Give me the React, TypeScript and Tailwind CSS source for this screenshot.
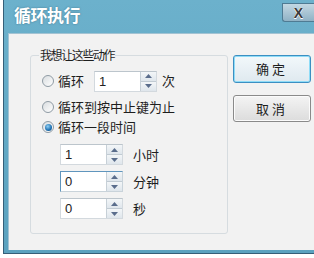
import React from "react";

const CJK = "font-['Microsoft_YaHei','Noto_Sans_CJK_SC',sans-serif]";

const Radio = ({ checked }: { checked?: boolean }) => (
  <span className="w-[12px] h-[12px] shrink-0 rounded-full border border-[#8f9ba4] bg-gradient-to-br from-[#d9dde0] to-[#ffffff] flex items-center justify-center">
    {checked && (
      <span className="w-[7px] h-[7px] rounded-full bg-[radial-gradient(circle_at_40%_35%,#8fd0f5,#1d6fb0_60%,#0f4a7d)]" />
    )}
  </span>
);

const Arrow = ({ up }: { up?: boolean }) => (
  <svg width="7" height="4" viewBox="0 0 7 4">
    <path d={up ? "M0 4 L3.5 0 L7 4 Z" : "M0 0 L3.5 4 L7 0 Z"} fill="#5a6d8c" />
  </svg>
);

const Spin = ({ value, focused }: { value: string; focused?: boolean }) => (
  <div
    className={`w-[63px] h-[21px] flex bg-white border ${
      focused ? "border-[#5f95bd] border-r-[#c9d3da] border-b-[#c9d3da]" : "border-[#d3d9de] border-t-[#bcc5cc]"
    }`}
  >
    <span className="flex-1 pl-[4px] text-[13px] leading-[19px] text-[#222] font-['Liberation_Sans',sans-serif]">
      {value}
    </span>
    <div className="w-[16px] flex flex-col border-l border-[#c7d0d7]">
      <div className="flex-1 flex items-center justify-center bg-gradient-to-b from-[#f3f6f8] to-[#dfe6ec] border-b border-[#c1cbd3]">
        <Arrow up />
      </div>
      <div className="flex-1 flex items-center justify-center bg-gradient-to-b from-[#f3f6f8] to-[#dfe6ec]">
        <Arrow />
      </div>
    </div>
  </div>
);

export default function App() {
  return (
    <div className={`w-[314px] h-[258px] bg-white overflow-hidden ${CJK}`}>
      <div className="ml-[3px] h-[254px] flex flex-col bg-gradient-to-b from-[#6cb1cc] to-[#5ba2bf] border-l border-b border-[#355f78]">
        {/* title bar */}
        <div className="h-[33px] shrink-0 flex items-start justify-between">
          <span className="ml-[10px] mt-[4px] text-[17px] leading-[22px] font-bold text-white tracking-[-0.5px] [text-shadow:0_0_2px_rgba(40,80,100,0.6)]">
            循环执行
          </span>
          <div className="mt-[3px] w-[32px] h-[19px] rounded-bl-[3px] border border-r-0 border-[#4f7b93] bg-gradient-to-b from-[#c3d8e3] to-[#90b2c5] flex items-center justify-center">
            <span className="text-[14px] leading-[14px] font-bold text-[#3a3a3a] font-['Liberation_Sans',sans-serif] [text-shadow:0_0_1px_#fff,0_1px_0_#fff]">
              X
            </span>
          </div>
        </div>

        {/* client area */}
        <div className="flex-1 ml-[4px] mb-[3px] bg-[#f2f2f2] border-t border-l border-[#a3c3d3] flex items-start text-[#1e1e1e]">
          {/* group box */}
          <div className="relative mt-[21px] ml-[21px] w-[198px] h-[179px] shrink-0 border border-[#d6dce0] rounded-[3px] flex flex-col">
            <span className="absolute left-[8px] top-[-8px] px-[1px] bg-[#f2f2f2] text-[12px] leading-[14px] tracking-[-1.4px]">
              我想让这些动作
            </span>

            <div className="mt-[15px] ml-[11px] h-[20px] flex items-center text-[13px]">
              <Radio />
              <span className="ml-[4px] leading-[16px]">循环</span>
              <div className="ml-[10px]">
                <Spin value="1" />
              </div>
              <span className="ml-[5px] leading-[16px]">次</span>
            </div>

            <div className="mt-[6px] ml-[11px] h-[20px] flex items-center text-[13px]">
              <Radio />
              <span className="ml-[4px] leading-[16px]">循环到按中止键为止</span>
            </div>

            <div className="ml-[11px] h-[20px] flex items-center text-[13px]">
              <Radio checked />
              <span className="ml-[4px] leading-[16px]">循环一段时间</span>
            </div>

            <div className="mt-[7px] ml-[29px] flex flex-col gap-[6px] text-[13px]">
              <div className="flex items-center">
                <Spin value="1" />
                <span className="ml-[10px]">小时</span>
              </div>
              <div className="flex items-center">
                <Spin value="0" focused />
                <span className="ml-[10px]">分钟</span>
              </div>
              <div className="flex items-center">
                <Spin value="0" />
                <span className="ml-[10px]">秒</span>
              </div>
            </div>
          </div>

          {/* buttons */}
          <div className="mt-[21px] ml-[5px] flex flex-col gap-[12px]">
            <button className="w-[78px] h-[28px] rounded-[3px] border border-[#3c8fc2] bg-gradient-to-b from-[#f2f8fb] to-[#dfe9ef] shadow-[inset_0_0_0_1px_#8fdcf7] text-[13px] text-[#1e1e1e] tracking-[3px]">
              确定
            </button>
            <button className="w-[78px] h-[27px] rounded-[3px] border border-[#8a8a8a] bg-gradient-to-b from-[#f4f4f4] to-[#dcdcdc] shadow-[inset_0_0_0_1px_#fbfbfb] text-[13px] text-[#1e1e1e] tracking-[3px]">
              取消
            </button>
          </div>
        </div>
      </div>
    </div>
  );
}
